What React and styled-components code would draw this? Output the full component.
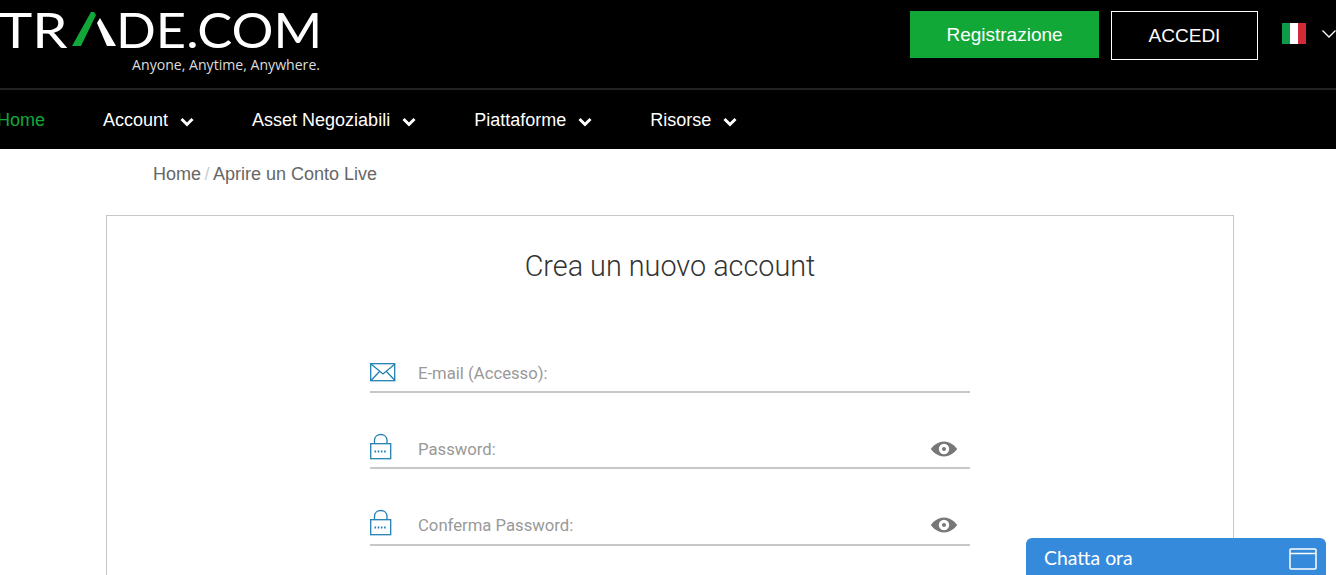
import React from 'react'
import styled, { createGlobalStyle } from 'styled-components'

const GlobalStyle = createGlobalStyle`
  html, body {
    margin: 0;
    height: 100%;
    overflow: hidden;
    background: #fff;
  }
  body {
    font-family: "Liberation Sans", Arial, sans-serif;
  }
`

const Header = styled.header`
  background: #000;
  height: 149px;
`

const TopBar = styled.div`
  height: 88px;
  border-bottom: 2px solid #222;
  display: flex;
  justify-content: space-between;
  overflow: hidden;
`

const Logo = styled.div`
  width: 320px;
  padding-top: 4px;
`

const Wordmark = styled.div`
  display: flex;
  align-items: center;
  height: 50px;
  color: #fff;
  font-family: "Lato", sans-serif;
  font-size: 49px;
  font-weight: 400;
  line-height: 50px;
  white-space: nowrap;
`

// the logo letters are wider than Lato, so they get stretched a bit
const LogoPart = styled.span`
  display: block;
  flex: none;
  width: ${props => props.$width}px;
  margin-left: ${props => props.$left}px;
  transform: scaleX(${props => props.$scale});
  transform-origin: left center;
`

const LogoSlash = styled.svg`
  flex: none;
  width: 49px;
  height: 36px;
`

const Tagline = styled.div`
  margin-top: 2px;
  text-align: right;
  color: #ddd;
  font-family: "Open Sans", sans-serif;
  font-size: 14.1px;
  line-height: 18px;
`

const Actions = styled.div`
  display: flex;
  align-items: flex-start;
  padding-top: 11px;
`

const RegisterButton = styled.a`
  width: 189px;
  height: 47px;
  display: flex;
  align-items: center;
  justify-content: center;
  background: #12a838;
  color: #fff;
  font-size: 19px;
`

const LoginButton = styled.a`
  box-sizing: border-box;
  width: 147px;
  height: 49px;
  margin-left: 12px;
  display: flex;
  align-items: center;
  justify-content: center;
  border: 1px solid #fff;
  color: #fff;
  font-size: 19px;
`

const Flag = styled.div`
  width: 24px;
  height: 21px;
  margin: 12px 0 0 24px;
  background: linear-gradient(90deg, #0e9a48 0 33%, #fff 33% 66%, #d32a3a 66% 100%);
`

const LangChevron = styled.svg`
  width: 14px;
  height: 8px;
  margin: 19px 0 0 16px;
`

const Nav = styled.nav`
  height: 59px;
  padding-top: 2px;
  box-sizing: border-box;
  display: flex;
  align-items: center;
  margin-left: -3px;
`

const NavItem = styled.a`
  display: flex;
  align-items: center;
  margin-right: 58px;
  color: ${props => (props.$active ? '#12a838' : '#fff')};
  font-size: 18px;
`

const NavChevron = styled.svg`
  width: 14px;
  height: 10px;
  margin: 3px 0 0 12px;
`

const Breadcrumb = styled.div`
  padding: 15px 0 0 153px;
  height: 52px;
  box-sizing: border-box;
  color: #666;
  font-size: 18px;
  line-height: 21px;
`

const Slash = styled.span`
  color: #ccc;
  margin: 0 3.5px;
`

const Card = styled.section`
  box-sizing: border-box;
  width: 1128px;
  height: 700px;
  margin: 14px 0 0 106px;
  border: 1px solid #c8c8c8;
  padding-top: 33px;
`

const Title = styled.h1`
  margin: 0;
  text-align: center;
  color: #333;
  font-family: "Roboto", sans-serif;
  font-size: 28.8px;
  font-weight: 300;
  line-height: 34px;
`

const Form = styled.form`
  width: 600px;
  margin: 73px 0 0 263px;
  display: flex;
  flex-direction: column;
  gap: 39px;
`

const Field = styled.div`
  height: 35px;
  display: flex;
  align-items: center;
  border-bottom: 2px solid #c8c8c8;

  &:last-child {
    padding-bottom: 1px;
  }
`

const FieldIcon = styled.svg`
  width: 26px;
  height: 26px;
  flex: none;
  color: #2280b4;
  overflow: visible;
`

const LockIcon = styled(FieldIcon)`
  margin-top: -6px;
`

const Label = styled.label`
  flex: 1;
  margin-left: 22px;
  color: #999;
  font-family: "Roboto", sans-serif;
  font-size: 16.7px;
`

const EyeIcon = styled.svg`
  width: 28px;
  height: 18px;
  flex: none;
  margin: -1px 12px 0 0;
  color: #777;
`

const Chat = styled.div`
  position: fixed;
  left: 1026px;
  top: 538px;
  width: 300px;
  height: 37px;
  box-sizing: border-box;
  padding: 1px 9px 0 18px;
  display: flex;
  align-items: center;
  justify-content: space-between;
  background: #368adb;
  border-radius: 6px 6px 0 0;
  color: #fff;
  font-family: "Lato", sans-serif;
  font-size: 19.4px;
`

const ChatIcon = styled.svg`
  width: 28px;
  height: 24px;
  margin-top: 3px;
`

const Chevron = ({ as: Comp, width = 3 }) => (
  <Comp viewBox="0 0 14 10" fill="none" stroke="#fff" strokeWidth={width}>
    <path d="M1.5 2 L7 7.5 L12.5 2" />
  </Comp>
)

const Envelope = () => (
  <FieldIcon viewBox="0 0 26 26" fill="none" stroke="currentColor" strokeWidth="1.3">
    <rect x="0.7" y="2.7" width="24" height="17" />
    <path d="M1 3 L13 13 L25 3 M1 19.5 L9.5 10.5 M25 19.5 L16.5 10.5" />
  </FieldIcon>
)

const Lock = () => (
  <LockIcon viewBox="0 0 26 26" fill="none" stroke="currentColor" strokeWidth="1.3">
    <rect x="0.7" y="9.7" width="20" height="15" />
    <path d="M4.5 9.5 V6.5 C4.5 -1.5 17 -1.5 17 6.5 V9.5" />
    <path d="M4.5 17.5 H17" strokeWidth="1.8" strokeDasharray="1.6 1.6" />
  </LockIcon>
)

const Eye = () => (
  <EyeIcon viewBox="0 0 28 18">
    <path
      fillRule="evenodd"
      fill="currentColor"
      d="M14 1.5 C8 1.5 3.5 5.5 0.8 9 C3.5 12.5 8 16.5 14 16.5 C20 16.5 24.5 12.5 27.2 9 C24.5 5.5 20 1.5 14 1.5 Z M14 3.8 a5.2 5.2 0 1 1 0 10.4 a5.2 5.2 0 1 1 0 -10.4 Z M14 7 a2 2 0 1 0 0 4 a2 2 0 1 0 0 -4 Z"
    />
  </EyeIcon>
)

export default function App() {
  return (
    <>
      <GlobalStyle />
      <Header>
        <TopBar>
          <Logo>
            <Wordmark>
              <LogoPart $width={70} $left={-1} $scale={1.15}>TR</LogoPart>
              <LogoSlash viewBox="0 0 49 36">
                <polygon points="3,35 12,35 27,4 25,1 22,1" fill="#12a838" />
                <polygon points="28,12 31,7 47,35 38,35" fill="#fff" />
              </LogoSlash>
              <LogoPart $width={190} $left={-2} $scale={1.07}>DE.COM</LogoPart>
            </Wordmark>
            <Tagline>Anyone, Anytime, Anywhere.</Tagline>
          </Logo>
          <Actions>
            <RegisterButton>Registrazione</RegisterButton>
            <LoginButton>ACCEDI</LoginButton>
            <Flag />
            <LangChevron viewBox="0 0 14 8" fill="none" stroke="#fff" strokeWidth="1.3">
              <path d="M0.5 0.5 L7 7 L13.5 0.5" />
            </LangChevron>
          </Actions>
        </TopBar>
        <Nav>
          <NavItem $active>Home</NavItem>
          <NavItem>Account<Chevron as={NavChevron} /></NavItem>
          <NavItem>Asset Negoziabili<Chevron as={NavChevron} /></NavItem>
          <NavItem>Piattaforme<Chevron as={NavChevron} /></NavItem>
          <NavItem>Risorse<Chevron as={NavChevron} /></NavItem>
        </Nav>
      </Header>
      <Breadcrumb>Home<Slash>/</Slash>Aprire un Conto Live</Breadcrumb>
      <Card>
        <Title>Crea un nuovo account</Title>
        <Form>
          <Field>
            <Envelope />
            <Label>E-mail (Accesso):</Label>
          </Field>
          <Field>
            <Lock />
            <Label>Password:</Label>
            <Eye />
          </Field>
          <Field>
            <Lock />
            <Label>Conferma Password:</Label>
            <Eye />
          </Field>
        </Form>
      </Card>
      <Chat>
        Chatta ora
        <ChatIcon viewBox="0 0 28 24" fill="none" stroke="#fff" strokeWidth="1.5">
          <rect x="1" y="2" width="26" height="20" rx="1" />
          <path d="M1 6.5 H27" />
        </ChatIcon>
      </Chat>
    </>
  )
}
